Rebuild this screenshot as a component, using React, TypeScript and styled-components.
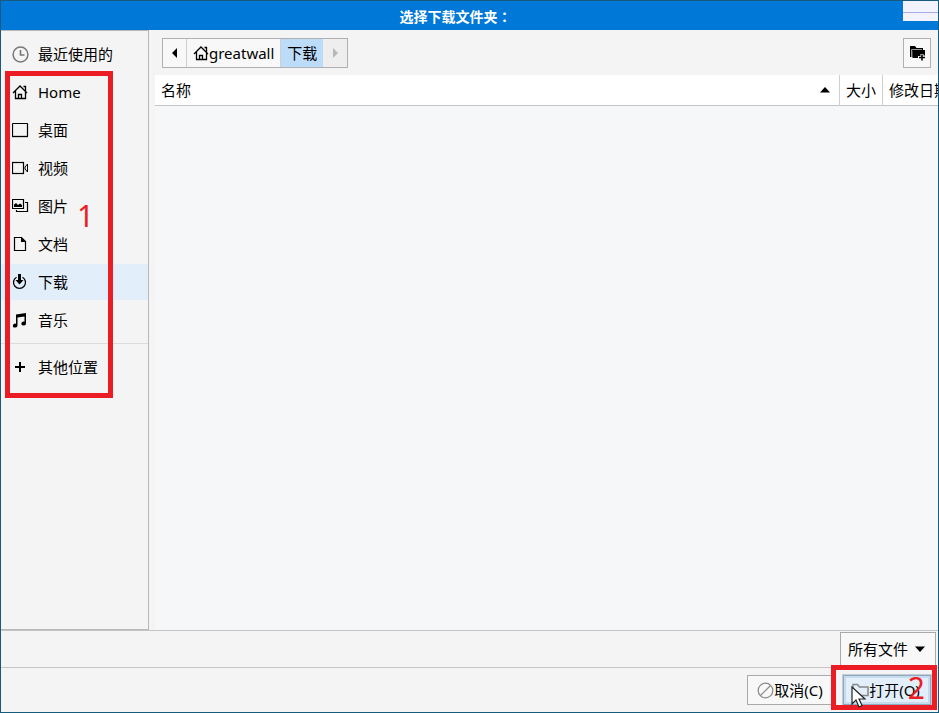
import React from "react";
import styled, { createGlobalStyle } from "styled-components";

const GlobalStyle = createGlobalStyle`
  *, *::before, *::after { box-sizing: border-box; }
  body { margin: 0; }
  body, button, select, table {
    font-family: "Noto Sans", "Noto Sans CJK SC", sans-serif;
    font-size: 15px;
    line-height: 20px;
    color: #000;
  }
  svg { display: block; flex: none; }
`;

const Dialog = styled.div`
  display: flex;
  flex-direction: column;
  min-height: 100vh;
  overflow: hidden;
  background: #f4f4f4;
  border: 1px solid #175b7c;
`;

const TitleBar = styled.header`
  position: relative;
  display: flex;
  align-items: center;
  justify-content: center;
  height: 29px;
  padding-right: 28px;
  background: #0078d7;
`;

const Title = styled.h1`
  margin: 0;
  font-family: "Noto Sans CJK TC", sans-serif;
  font-size: 14px;
  line-height: 18px;
  font-weight: 700;
  color: #fff;
`;

const WindowControls = styled.div`
  position: absolute;
  top: 0;
  right: 0;
  width: 35px;
  height: 20px;
  background: linear-gradient(#f3f3fd 11px, #a6aee6 11px, #a6aee6 12px, #f3f3fd 12px);
`;

const Content = styled.div`
  display: flex;
  flex: 1;
  border-bottom: 1px solid #c4c4c4;
`;

const Sidebar = styled.nav`
  width: 148px;
  padding-top: 5px;
  border: solid #b8b8b8;
  border-width: 1px 1px 1px 0;
`;

const PlaceList = styled.ul`
  margin: 0;
  padding: 0;
  list-style: none;
`;

const MarkedPlaces = styled.div`
  position: relative;
`;

const PlaceLink = styled.a<{ $active?: boolean }>`
  display: grid;
  grid-template-columns: 17px auto;
  align-items: center;
  justify-content: start;
  gap: 9px;
  height: 36px;
  margin-bottom: 2px;
  padding-left: 11px;
  color: #000;
  text-decoration: none;
  white-space: nowrap;
  background: ${(p) => (p.$active ? "#e2effb" : "transparent")};
`;

const Separator = styled.hr`
  height: 1px;
  margin: 5px 0;
  border: 0;
  background: #dcdcdc;
`;

const MarkFrame = styled.div`
  position: absolute;
  inset: -3px 35px -13px 4px;
  border: 5px solid #ec1c24;
  pointer-events: none;
`;

const OpenMarkFrame = styled(MarkFrame)`
  inset: -3px 1px 2px auto;
  width: 106px;
`;

const MarkNumber = styled.span<{ $place: string }>`
  position: absolute;
  inset: ${(p) => p.$place};
  font-size: 30px;
  line-height: 30px;
  color: #ec1c24;
  pointer-events: none;
`;

const Browser = styled.main`
  display: flex;
  flex: 1;
  flex-direction: column;
  min-width: 0;
  padding-left: 6px;
`;

const Toolbar = styled.div`
  display: flex;
  align-items: center;
  justify-content: space-between;
  height: 45px;
  padding: 0 7px;
`;

const PathBar = styled.div`
  display: flex;
  height: 30px;
  border: 1px solid #b0b0b0;
`;

const PathButton = styled.button<{ $tone?: "current" | "off" }>`
  display: flex;
  align-items: center;
  justify-content: center;
  min-width: 24px;
  padding: 0 6px;
  border: 0;
  border-right: ${(p) => (p.$tone ? "0" : "1px solid #cfcfcf")};
  background: ${(p) =>
    p.$tone === "current" ? "#bddcfa" : p.$tone === "off" ? "#eeeeee" : "#f8f8f8"};
`;

const IconButton = styled.button`
  display: flex;
  align-items: center;
  justify-content: center;
  width: 28px;
  height: 30px;
  padding: 0;
  border: 1px solid #b0b0b0;
  background: #f8f8f8;
`;

const FileArea = styled.div`
  flex: 1;
  background: #f6f7f9;
`;

const FileTable = styled.table`
  width: 100%;
  table-layout: fixed;
  border-collapse: separate;
  border-spacing: 0;
`;

const ColumnHead = styled.th<{ $width?: number }>`
  width: ${(p) => (p.$width ? `${p.$width}px` : "auto")};
  height: 31px;
  padding: 0 6px;
  overflow: hidden;
  font-weight: 400;
  text-align: left;
  white-space: nowrap;
  background: #fff;
  border-bottom: 1px solid #c4c4c4;
  & + & { border-left: 1px solid #cfcfcf; }
`;

const SortLabel = styled.span`
  display: flex;
  align-items: center;
  justify-content: space-between;
  padding-right: 3px;
`;

const FilterRow = styled.div`
  display: flex;
  align-items: center;
  justify-content: flex-end;
  height: 37px;
  padding-right: 2px;
  border-bottom: 1px solid #c4c4c4;
`;

const SelectBox = styled.div`
  display: grid;
  align-items: center;
  & > * { grid-area: 1 / 1; }
  svg { justify-self: end; margin-right: 11px; pointer-events: none; }
`;

const FilterSelect = styled.select`
  appearance: none;
  width: 96px;
  height: 34px;
  padding: 0 7px;
  border: 1px solid #a9a9a9;
  border-radius: 0;
  background: #f8f8f8;
`;

const Actions = styled.footer`
  position: relative;
  display: flex;
  justify-content: flex-end;
  gap: 8px;
  height: 44px;
  padding: 7px 7px 7px 0;
`;

const ActionButton = styled.button<{ $primary?: boolean }>`
  display: flex;
  align-items: center;
  justify-content: center;
  width: 88px;
  padding: 0 2px 0 0;
  white-space: nowrap;
  border: 1px solid ${(p) => (p.$primary ? "#8fa9bf" : "#a9a9a9")};
  outline: ${(p) => (p.$primary ? "1px solid #c3ccd5" : "none")};
  box-shadow: ${(p) => (p.$primary ? "inset 0 0 0 2px #c6dcee" : "none")};
  background: ${(p) => (p.$primary ? "#e2effb" : "#f8f8f8")};
`;

const Pointer = styled.svg`
  position: absolute;
  right: 72px;
  bottom: 4px;
`;

const HomeIcon = () => (
  <svg width="16" height="16" viewBox="0 0 16 16" fill="none" stroke="#000" strokeWidth="1.3">
    <path d="M1 9 8 2l7 7M3.500 7v7.500h10V7M6.500 14.500v-4h3v4M13.500 7V2.500h-2" />
  </svg>
);

const ClockIcon = () => (
  <svg width="17" height="17" viewBox="0 0 17 17" fill="none" stroke="#777">
    <circle cx="8.500" cy="8.500" r="7.400" strokeWidth="1.500" />
    <path d="M8.500 4v5h4" strokeWidth="1.600" />
  </svg>
);

const DesktopIcon = () => (
  <svg width="17" height="16" viewBox="0 0 17 16" fill="none" stroke="#000">
    <rect x=".5" y="1.500" width="15" height="13" rx=".5" strokeWidth="1.200" />
    <path d="M0 14.500h16" strokeWidth="1.300" />
  </svg>
);

const VideoIcon = () => (
  <svg width="17" height="16" viewBox="0 0 17 16" fill="none" stroke="#000">
    <rect x=".5" y="2.500" width="11" height="11" strokeWidth="1.200" />
    <path d="m15.500 4-2.500 3v2l2.500 3z" />
  </svg>
);

const PictureIcon = () => (
  <svg width="17" height="16" viewBox="0 0 17 16" fill="none" stroke="#000" strokeWidth="1.200">
    <path d="M.5 1.500h11v9H.5zM13 4.500h2.500v9h-11V12" />
    <path d="M2 9V6.500L4 5l2 2 2-1.500 2 1.500v2z" fill="#000" stroke="none" />
  </svg>
);

const DocumentIcon = () => (
  <svg width="17" height="16" viewBox="0 0 17 16" fill="none" stroke="#000" strokeWidth="1.200">
    <path d="M2.500 1.500h7l4 4v9h-11z" />
    <path d="M9 1.500v4.500h4.500z" fill="#000" stroke="none" />
  </svg>
);

const DownloadIcon = () => (
  <svg width="17" height="16" viewBox="0 0 17 16" fill="none" stroke="#000">
    <path d="M4.500 3.200a6 6 0 1 0 6 0" strokeWidth="1.300" />
    <path d="M6 0h3v6h2.500l-4 4.500-4-4.500H6z" fill="#000" stroke="none" />
  </svg>
);

const MusicIcon = () => (
  <svg width="17" height="16" viewBox="0 0 17 16">
    <path d="M4 2.500 14 1v10.500a2.300 2 0 1 1-1.500-1.900V4.500l-7 1v8a2.300 2 0 1 1-1.500-1.800z" />
  </svg>
);

const PlusIcon = () => (
  <svg width="17" height="16" viewBox="0 0 17 16" fill="none" stroke="#000" strokeWidth="2">
    <path d="M8 3v10M3 8h10" />
  </svg>
);

const NewFolderIcon = () => (
  <svg width="17" height="16" viewBox="0 0 17 16">
    <path d="M1 1h5l1.500 2H14v3H3.500v6H1z" />
    <path d="M3.500 5H16v5.500h-1.500V9h-3v2H9v2H3.500z" />
    <path d="M2.500 12V4.500H13" fill="none" stroke="#f8f8f8" strokeWidth=".6" />
    <path d="M13 9.500v6M10 12.500h6" stroke="#000" strokeWidth="1.600" />
  </svg>
);

const CancelIcon = () => (
  <svg width="17" height="17" viewBox="0 0 17 17" fill="none" stroke="#888" strokeWidth="1.200">
    <circle cx="8.500" cy="8.500" r="7.300" />
    <path d="M3.500 13.500 13.500 3.500" />
  </svg>
);

const FolderIcon = () => (
  <svg width="17" height="16" viewBox="0 0 17 16" fill="none" stroke="#888" strokeWidth="1.500">
    <path d="M1 13.500V2.500h4.500L7.500 5H16v8.500z" />
  </svg>
);

const Triangle = ({ dir, color = "#000" }: { dir: "left" | "right" | "up" | "down"; color?: string }) => {
  const shapes = {
    left: "M7 0v10L2 5z",
    right: "M3 0v10l5-5z",
    up: "M0 7.500h10L5 2z",
    down: "M0 2.500h10L5 8z",
  };
  return (
    <svg width="10" height="10" viewBox="0 0 10 10" fill={color}>
      <path d={shapes[dir]} />
    </svg>
  );
};

const places = [
  { name: "Home", icon: <HomeIcon /> },
  { name: "桌面", icon: <DesktopIcon /> },
  { name: "视频", icon: <VideoIcon /> },
  { name: "图片", icon: <PictureIcon /> },
  { name: "文档", icon: <DocumentIcon /> },
  { name: "下载", icon: <DownloadIcon />, active: true },
  { name: "音乐", icon: <MusicIcon /> },
];

export default function App() {
  return (
    <>
      <GlobalStyle />
      <Dialog>
        <TitleBar>
          <Title>选择下载文件夹：</Title>
          <WindowControls />
        </TitleBar>
        <Content>
          <Sidebar>
            <PlaceLink href="#recent"><ClockIcon />最近使用的</PlaceLink>
            <MarkedPlaces>
              <PlaceList>
                {places.map((place) => (
                  <li key={place.name}>
                    <PlaceLink href={`#${place.name}`} $active={place.active}>
                      {place.icon}
                      {place.name}
                    </PlaceLink>
                  </li>
                ))}
              </PlaceList>
              <Separator />
              <PlaceLink href="#other"><PlusIcon />其他位置</PlaceLink>
              <MarkFrame />
              <MarkNumber $place="127px auto auto 76px">1</MarkNumber>
            </MarkedPlaces>
          </Sidebar>
          <Browser>
            <Toolbar>
              <PathBar>
                <PathButton aria-label="后退"><Triangle dir="left" /></PathButton>
                <PathButton><HomeIcon />greatwall</PathButton>
                <PathButton $tone="current">下载</PathButton>
                <PathButton $tone="off" disabled aria-label="前进">
                  <Triangle dir="right" color="#b8b8b8" />
                </PathButton>
              </PathBar>
              <IconButton aria-label="新建文件夹"><NewFolderIcon /></IconButton>
            </Toolbar>
            <FileArea>
              <FileTable>
                <thead>
                  <tr>
                    <ColumnHead aria-sort="ascending">
                      <SortLabel>名称<Triangle dir="up" /></SortLabel>
                    </ColumnHead>
                    <ColumnHead $width={43}>大小</ColumnHead>
                    <ColumnHead $width={56}>修改日期</ColumnHead>
                  </tr>
                </thead>
              </FileTable>
            </FileArea>
          </Browser>
        </Content>
        <FilterRow>
          <SelectBox>
            <FilterSelect aria-label="文件类型">
              <option>所有文件</option>
            </FilterSelect>
            <Triangle dir="down" />
          </SelectBox>
        </FilterRow>
        <Actions>
          <ActionButton><CancelIcon />取消(C)</ActionButton>
          <ActionButton $primary><FolderIcon />打开(O)</ActionButton>
          <OpenMarkFrame />
          <Pointer width="15" height="22" viewBox="0 0 15 22">
            <path d="M1 1v17l4-4 3 7 3-1.500L8 13h6z" fill="#fff" stroke="#222" strokeWidth="1.200" />
          </Pointer>
          <MarkNumber $place="5px 13px auto auto">2</MarkNumber>
        </Actions>
      </Dialog>
    </>
  );
}
